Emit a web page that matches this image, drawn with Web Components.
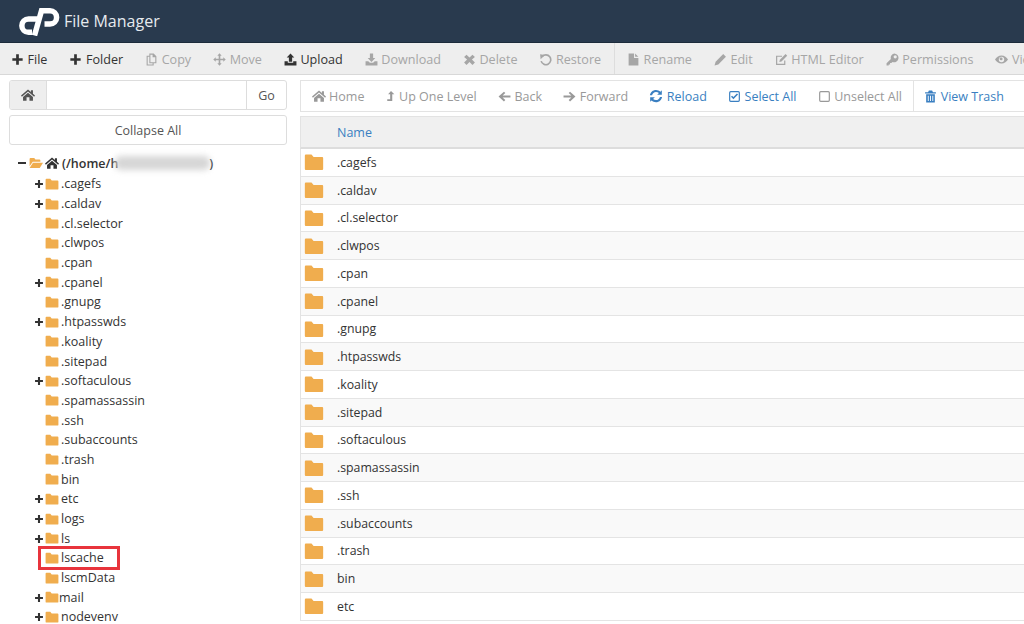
<!DOCTYPE html>
<html><head><meta charset="utf-8"><title>File Manager</title>
<style>
html,body{margin:0;padding:0;height:624px;overflow:hidden;background:#fff;font-family:"Open Sans","Liberation Sans",sans-serif;}
fm-body{display:grid;grid-template-columns:300px 1fr;}
</style></head><body>
<fm-header></fm-header>
<fm-toolbar></fm-toolbar>
<fm-body>
  <fm-side></fm-side>
  <fm-main></fm-main>
</fm-body>
<script>
const P={
plus:'<path d="M9.5 2.5h5v7h7v5h-7v7h-5v-7h-7v-5h7z"/>',
copy:'<path fill-rule="evenodd" d="M8 1h8l5 5v13h-5v4H3V5h5zM10 3v14h9V8h-5V3zM5 7v14h9v-2H8V7z"/>',
move:'<path d="M12 .5l4 4.5h-2.500v5.500H19V8l4.500 4-4.500 4v-2.500h-5.500V19H16l-4 4.500L8 19h2.500v-5.500H5V16L.5 12 5 8v2.500h5.500V5H8z"/>',
upload:'<path d="M12 1l7 7.500h-4v7.500H9V8.500H5zM1 15h6v3h10v-3h6v8H1z"/>',
download:'<path d="M9 1h6v8h4l-7 7.500L5 9h4zM1 15h5l3 3h6l3-3h5v8H1z"/>',
times:'<path d="M6.500 3L12 8.500 17.500 3 22 7.500 16.500 12l5.500 5.500-4.500 4.500L12 16.500 6.500 22 2 17.500 7.500 12 2 7.500z"/>',
undo:'<path fill="none" stroke="currentColor" stroke-width="3" d="M6 6.500A9 9 0 1 1 4 15"/><path d="M2 2.500l9 1-8 8z"/>',
file:'<path d="M3 1h10v8h8v14H3zM15 1l6 6h-6z"/>',
pencil:'<path d="M17 2l5 5-14 14-7 2 2-7z"/>',
edit:'<path fill="none" stroke="currentColor" stroke-width="2.200" d="M18 14v7H3V6h10"/><path d="M19.500 2l3 3L12 15.500l-4 1 1-4z"/>',
key:'<path fill-rule="evenodd" d="M15 1a8 8 0 1 1-3 15.400L10 18.500H7.500V21H5v2H1v-4l8-8A8 8 0 0 1 15 1zm2 3a3 3 0 1 0 0 6 3 3 0 0 0 0-6z"/>',
eye:'<path fill-rule="evenodd" d="M12 4.500c5.500 0 9.500 3.500 12 7.500-2.500 4-6.500 7.500-12 7.500S2.500 16 0 12c2.500-4 6.500-7.500 12-7.500zM12 7a5 5 0 1 0 0 10 5 5 0 0 0 0-10zm-.5 1.500a2.500 2.500 0 0 1 0 5 3 3 0 0 1-3-3c0-1 .8-2 3-2z"/>',
home:'<path d="M12 2.500l5 4.300V4h3.500v6L24 13l-1.500 1.800L12 5.800 1.500 14.800 0 13zM12 8l8.500 7.300V22H14.500v-6h-5v6H3.500v-6.700z"/>',
level:'<path d="M12 0l8 8h-5v16H3v-4h7V8H5z"/>',
left:'<path d="M11 3l2.500 2.500L8.500 10.300H23v3.400H8.500l5 4.800L11 21 1 12z"/>',
right:'<path d="M13 3l10 9-10 9-2.500-2.500 5-4.800H1v-3.400h14.500l-5-4.800z"/>',
reload:'<path d="M12 1.500c3 0 5.500 1.200 7.500 3L22 2v8h-8l3-3c-1.300-1.200-3-2-5-2-3.200 0-6 2.200-6.800 5.500H1.500C2.400 5.300 6.700 1.500 12 1.500zM2 14h8l-3 3c1.300 1.200 3 2 5 2 3.200 0 6-2.200 6.800-5.500h3.700C21.600 18.700 17.300 22.500 12 22.500c-3 0-5.500-1.200-7.500-3L2 22z"/>',
check:'<path fill-rule="evenodd" d="M5 2h14a3 3 0 0 1 3 3v14a3 3 0 0 1-3 3H5a3 3 0 0 1-3-3V5a3 3 0 0 1 3-3zm0 2.200a.8.8 0 0 0-.8.8v14c0 .4.4.8.8.8h14c.4 0 .8-.4.8-.8V5a.8.8 0 0 0-.8-.8z"/><path d="M10 17L5.500 12.500 7.500 10.500 10 13l6.500-6.500 2 2z"/>',
square:'<path fill-rule="evenodd" d="M5 2h14a3 3 0 0 1 3 3v14a3 3 0 0 1-3 3H5a3 3 0 0 1-3-3V5a3 3 0 0 1 3-3zm0 2.200a.8.8 0 0 0-.8.8v14c0 .4.4.8.8.8h14c.4 0 .8-.4.8-.8V5a.8.8 0 0 0-.8-.8z"/>',
trash:'<path fill-rule="evenodd" d="M9 1h6l1.500 3H22v2.500H2V4h5.500zM4 8h16v15H4zm3 2.500v10h1.700v-10zm4.200 0v10h1.700v-10zm4.200 0v10h1.700v-10z"/>',
folder:'<path d="M1 4.500C1 3.500 1.700 3 2.500 3H9l2.500 3H21.500c.9 0 1.500.6 1.500 1.500V20c0 .9-.6 1.500-1.500 1.500h-19C1.600 21.500 1 20.900 1 20z"/>',
open:'<path d="M1 5c0-1 .7-1.500 1.500-1.500H9L11 6h7c.9 0 1.500.6 1.500 1.500V10H6.500L1 17.500z"/><path d="M6.800 11.500H24L18.500 20.500H1z"/>'
};
class Base extends HTMLElement{
  constructor(){super();this.attachShadow({mode:'open'});}
  connectedCallback(){this.render();}
}
customElements.define('fm-icon',class extends Base{
  render(){const s=this.getAttribute('size')||14;
    this.shadowRoot.innerHTML=`<style>:host{display:inline-flex;flex:none;width:${s}px;height:${s}px}svg{width:100%;height:100%;fill:currentColor;display:block}</style><svg viewBox="0 0 24 24">${P[this.getAttribute('name')]}</svg>`;}
});
customElements.define('fm-header',class extends Base{
  render(){this.shadowRoot.innerHTML=`<style>
  :host{display:flex;align-items:center;height:42px;background:#293a4e;border-bottom:1px solid #1c2b3b;color:#e6eaee;padding-left:19px;font-size:16px;gap:4px}
  svg{width:41px;height:28px;display:block;margin-top:1px}
  </style>
  <svg viewBox="19 9 41 28" fill="none" stroke="#fff" stroke-width="5.500"><path d="M37 20H28.500a6.500 6.500 0 0 0 0 13.300H32"/><path d="M34.500 36.500L41.500 11.800H50a6.500 6.500 0 0 1 0 13.200H44.500"/></svg>
  <span>File Manager</span>`;}
});
customElements.define('fm-tool',class extends Base{
  render(){const c=this.hasAttribute('on')?'var(--on,#333)':this.hasAttribute('off')?'var(--off,#a6a6a6)':'#333';
    this.shadowRoot.innerHTML=`<style>
    :host{display:flex;align-items:center;gap:3.500px;padding:0 var(--pad,11px);white-space:nowrap;color:${c};flex:none}
    </style><fm-icon name="${this.getAttribute('icon')}" size="${this.getAttribute('size')||13}"></fm-icon><slot></slot>`;}
});
customElements.define('fm-toolbar',class extends Base{
  render(){
    const a=[['plus','File'],['plus','Folder'],['copy','Copy',1],['move','Move',1],['upload','Upload'],['download','Download',1],['times','Delete',1],['undo','Restore',1],0,['file','Rename',1],['pencil','Edit',1],['edit','HTML Editor',1],['key','Permissions',1],['eye','View',1]];
    this.shadowRoot.innerHTML=`<style>
    :host{display:flex;align-items:stretch;height:30px;padding-top:1px;background:#eee;border-bottom:1px solid #d8d8d8;font-size:12.600px;overflow:hidden}
    i{width:1px;background:#ddd;flex:none;margin:-1px 1px 0 2px}
    </style>`+a.map(x=>x?`<fm-tool icon="${x[0]}" ${x[2]?'off':''}>${x[1]}</fm-tool>`:'<i></i>').join('');
  }
});
customElements.define('fm-tree-row',class extends Base{
  render(){const t=this.hasAttribute('toggle');
    const mark=this.hasAttribute('mark');
    this.shadowRoot.innerHTML=`<style>
    :host{display:flex;align-items:center;height:19.700px;position:relative;color:#333;font-size:12.500px;padding-left:25px;white-space:nowrap}
    b{width:9px;height:9px;flex:none;margin-right:2px;display:flex}
    fm-icon{color:#f0ad4e;margin-right:${this.hasAttribute('tight')?0:2}px}
    b fm-icon{color:#333;margin:0}
    em{position:absolute;left:29px;top:-2px;width:82px;height:24px;box-sizing:border-box;border:3px solid #e8343c}
    </style><b>${t?'<fm-icon name="plus" size="10"></fm-icon>':''}</b><fm-icon name="folder" size="14"></fm-icon><slot></slot>${mark?'<em></em>':''}`;}
});
customElements.define('fm-side',class extends Base{
  render(){
    const rows=[['.cagefs','toggle'],['.caldav','toggle'],['.cl.selector'],['.clwpos'],['.cpan'],['.cpanel','toggle'],['.gnupg'],['.htpasswds','toggle'],['.koality'],['.sitepad'],['.softaculous','toggle'],['.spamassassin'],['.ssh'],['.subaccounts'],['.trash'],['bin'],['etc','toggle'],['logs','toggle'],['ls','toggle'],['lscache','mark'],['lscmData'],['mail','toggle tight'],['nodevenv','toggle']];
    this.shadowRoot.innerHTML=`<style>
    :host{display:flex;flex-direction:column;padding:5px 13px 0 9px;height:544px;overflow:hidden;color:#333;font-size:12.500px}
    .search{display:flex;height:30px;box-sizing:border-box;border:1px solid #ddd;border-radius:3px;overflow:hidden;flex:none}
    .h{width:36px;background:#eee;border-right:1px solid #ddd;display:flex;align-items:center;justify-content:center;color:#555}
    .in{flex:1}
    .go{width:39px;border-left:1px solid #ddd;display:flex;align-items:center;justify-content:center;color:#555}
    .btn{height:30px;box-sizing:border-box;border:1px solid #ddd;border-radius:3px;display:flex;align-items:center;justify-content:center;color:#555;margin-top:5px;flex:none}
    .root{display:flex;align-items:center;height:20px;margin:8px 0 1px;padding-left:9px;font-weight:600;white-space:nowrap;flex:none;color:#333}
    .root b{width:8px;height:2px;background:#333;margin-right:3px}
    .blur{display:inline-block;width:95px;height:14px;background:#d6d6d6;filter:blur(3px);border-radius:6px;margin-left:-3px;margin-right:-1px}
    </style>
    <div class="search"><div class="h"><fm-icon name="home" size="14"></fm-icon></div><div class="in"></div><div class="go">Go</div></div>
    <div class="btn">Collapse All</div>
    <div class="root"><b></b><fm-icon name="open" size="14" style="color:#f0ad4e;margin-right:2px"></fm-icon><fm-icon name="home" size="14" style="margin-right:3px"></fm-icon><span>(/home/h</span><span class="blur"></span><span>)</span></div>
    <div>${rows.map(r=>`<fm-tree-row ${r[1]||''}>${r[0]}</fm-tree-row>`).join('')}</div>`;
  }
});
customElements.define('fm-nav',class extends Base{
  render(){
    const a=[['home','Home',14],['level','Up One Level',10],['left','Back',13],['right','Forward',13],['reload','Reload',14,1],['check','Select All',13,1],['square','Unselect All',13],0,['trash','View Trash',13,1]];
    this.shadowRoot.innerHTML=`<style>
    :host{display:flex;align-items:stretch;height:32px;box-sizing:border-box;border:1px solid #e3e3e3;border-right:0;background:#fff;font-size:12.500px;overflow:hidden;flex:none;--pad:10.600px;--on:#3a7fc1;--off:#999}
    i{width:1px;background:#e3e3e3;flex:none}
    fm-tool:first-child{margin-left:.6px}
    </style>`+a.map(x=>x?`<fm-tool icon="${x[0]}" size="${x[2]}" ${x[3]?'on':'off'}>${x[1]}</fm-tool>`:'<i></i>').join('');
  }
});
customElements.define('fm-row',class extends Base{
  render(){const alt=this.hasAttribute('alt');
    this.shadowRoot.innerHTML=`<style>
    :host{display:flex;align-items:center;height:27.750px;box-sizing:border-box;border-bottom:1px solid #e4e4e4;background:${alt?'#f9f9f9':'#fff'};color:#333;font-size:12.300px;padding-left:3px;flex:none}
    fm-icon{color:#f0ad4e;margin-right:13px}
    </style><fm-icon name="folder" size="20"></fm-icon><slot></slot>`;}
});
customElements.define('fm-main',class extends Base{
  render(){
    const n=['.cagefs','.caldav','.cl.selector','.clwpos','.cpan','.cpanel','.gnupg','.htpasswds','.koality','.sitepad','.softaculous','.spamassassin','.ssh','.subaccounts','.trash','bin','etc'];
    this.shadowRoot.innerHTML=`<style>
    :host{display:flex;flex-direction:column;padding-top:5px;height:544px;overflow:hidden}
    .th{height:33px;box-sizing:border-box;margin-top:4px;background:#f0f0f0;border:1px solid #e3e3e3;border-right:0;border-bottom:2px solid #ddd;color:#3a7fc1;font-size:12.500px;display:flex;align-items:center;padding-left:36px;flex:none}
    .t{border-left:1px solid #e3e3e3;flex:none}
    </style><fm-nav></fm-nav><div class="th">Name</div><div class="t">${n.map((x,i)=>`<fm-row ${i%2?'alt':''}>${x}</fm-row>`).join('')}</div>`;
  }
});
</script>
</body></html>
